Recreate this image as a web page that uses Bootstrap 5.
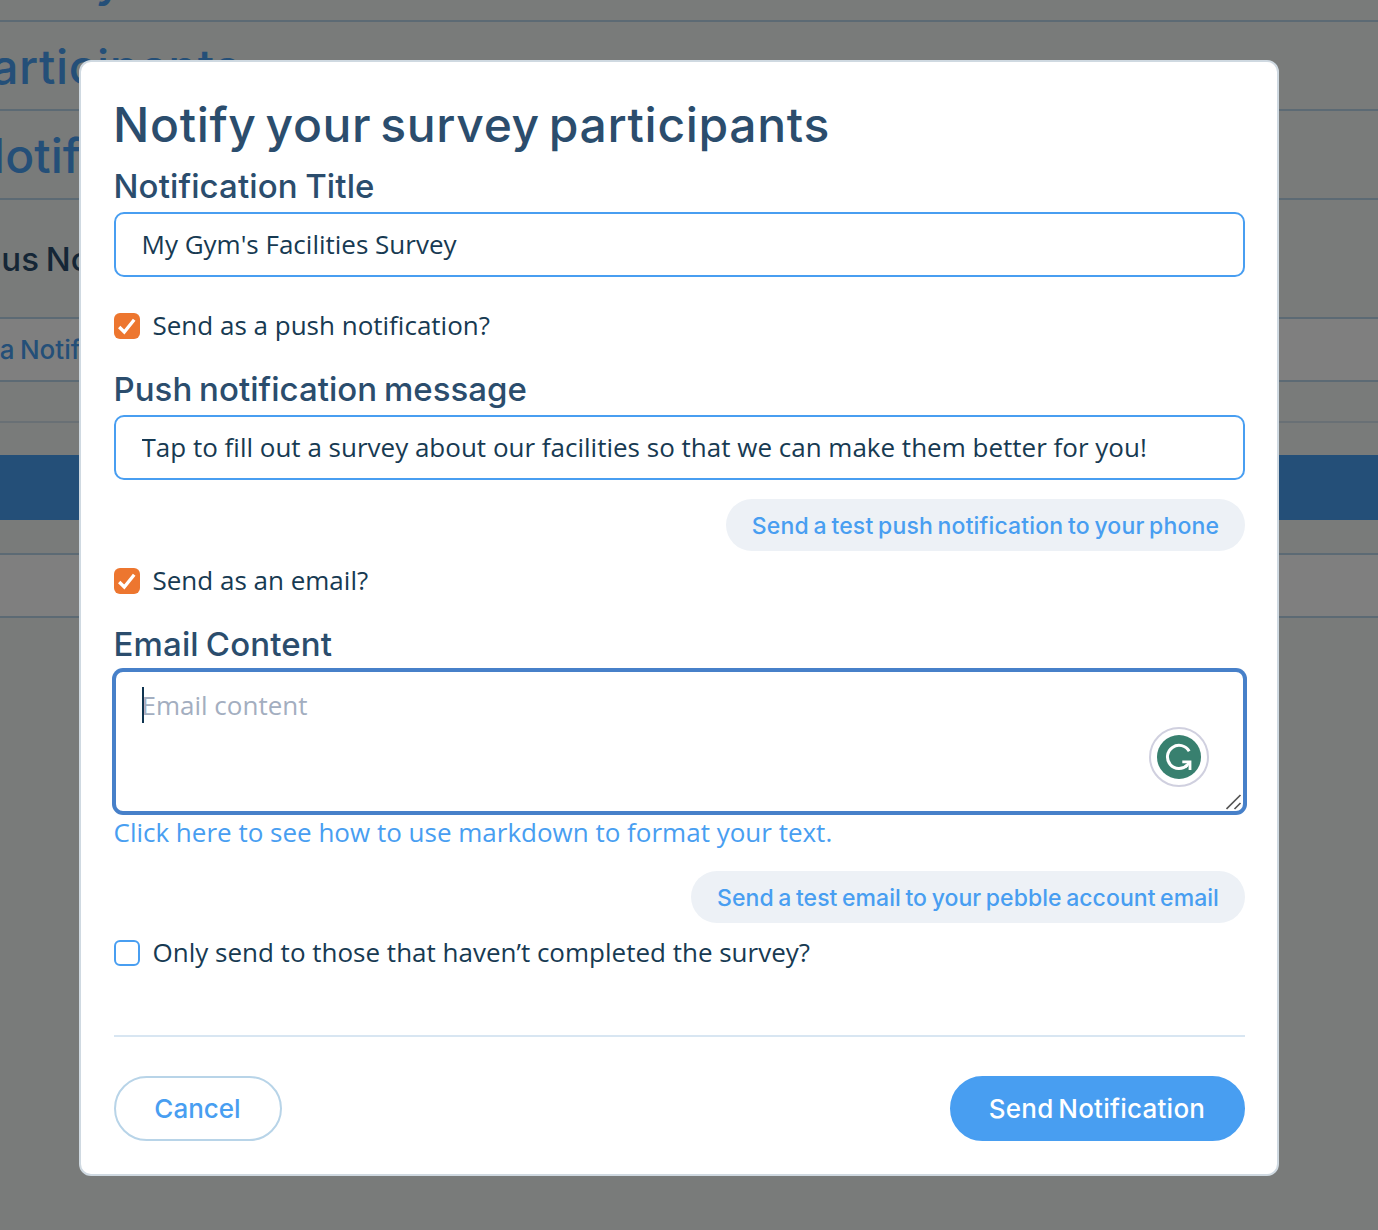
<!DOCTYPE html>
<html lang="en">
<head>
<meta charset="utf-8">
<meta name="viewport" content="width=device-width, initial-scale=1">
<title>Notify your survey participants</title>
<link href="https://cdn.jsdelivr.net/npm/bootstrap@5.3.0/dist/css/bootstrap.min.css" rel="stylesheet">
<style>
  :root { --blue: #489ef1; --navy: #2b4d6d; --ink: #173a52; --line: #b8d4e8; }
  body { background: #f2f6f4; color: var(--ink); font-family: "Open Sans", "Noto Sans", sans-serif; font-size: 26px; height: 1230px; overflow: hidden; }
  .display-face { font-family: Inter, sans-serif; font-weight: 500; }

  .page-behind { height: 1230px; overflow: hidden; white-space: nowrap; }
  .fold-row { border-bottom: 2px solid var(--line); color: var(--blue); font-size: 48px; line-height: 89px; height: 89px; letter-spacing: .6px; }
  .fold-row.first { height: 22px; display: flex; align-items: flex-end; line-height: 60px; padding-bottom: 11px; }
  .past-title { height: 117px; line-height: 119px; font-size: 33px; color: var(--navy); word-spacing: -2px; }
  .strip { height: 65px; border: solid var(--line); border-width: 2px 0; background: #fff; color: var(--blue); line-height: 61px; word-spacing: -1.5px; }
  .thin-rule { height: 2px; background: #d2e0ea; margin: 39px 0 32px; }
  .bar-solid { height: 65px; background: var(--blue); margin-bottom: 33px; }
  .out-a { margin-left: -40px; } .out-n { margin-left: -31px; letter-spacing: 0; } .out-p { margin-left: -98px; } .out-s { margin-left: -69.5px; } .out-y { margin-left: -41px; }

  .modal-backdrop { opacity: .5; }
  .modal-dialog { max-width: 1200px; margin: 60px 0 0 79px; }
  .modal-content { height: 1116px; border: 2px solid #cfd9e1; border-radius: 12px; padding: 33px 32px 33px 33px; background: #fff; color: var(--ink); }
  .big-title { font-size: 48px; line-height: 60px; margin: 0 0 11px -1px; color: var(--navy); letter-spacing: .68px; word-spacing: -4.6px; }
  .field-title { font-size: 33px; line-height: 40px; margin: 0 0 6px -.5px; color: var(--navy); letter-spacing: .12px; word-spacing: -1.5px; }
  .field-title.snug { letter-spacing: .03px; word-spacing: -2px; }
  .field-title.mail { letter-spacing: .15px; }
  .form-control, .form-control:focus { font-size: 26px; color: var(--ink); border: 2px solid var(--blue); border-radius: 10px; padding: 0 26px 2px 25.5px; height: 65px; box-shadow: none; }
  textarea.form-control, textarea.form-control:focus { height: 143px; min-height: 0; padding: 13px 26px 13px 25.5px; line-height: 40px; border-color: #4780c9; box-shadow: 0 0 0 2px #4780c9; resize: none; border-radius: 9px; }
  textarea.form-control::placeholder { color: #a3aec0; }
  .form-check { display: flex; align-items: center; gap: 12.5px; height: 40px; min-height: 0; padding: 0; margin: 0; }
  .form-check label { padding-bottom: 2px; }
  .form-check.spaced { margin-bottom: 23px; }
  .form-check.after-input { margin-top: 29px; }
  .form-check .form-check-input { float: none; width: 26px; height: 26px; margin: 0; flex: none; border: 2px solid var(--blue); border-radius: 6px; background-color: #fff; }
  .form-check .form-check-input:checked { border: 0; background: #ed762f url("data:image/svg+xml,%3Csvg xmlns='http://www.w3.org/2000/svg' viewBox='0 0 26 26'%3E%3Cpath d='M5.2 14 10.3 19 20.2 6.8' fill='none' stroke='%23fff' stroke-width='3.3'/%3E%3C/svg%3E") center / 26px no-repeat; }
  .pill { width: 519px; height: 52px; line-height: 54px; border-radius: 26px; padding: 0; border: 0; background: #edf1f6; color: var(--blue); font-size: 23px; letter-spacing: .15px; word-spacing: -1.6px; }
  .pill.tight { width: 554px; letter-spacing: .05px; }
  .push-row { margin: 19px 0 10px; }
  .mail-row { margin: 18px 0 10px; }
  .md-link { height: 40px; line-height: 38px; color: var(--blue); text-decoration: none; margin-left: -.5px; }
  .foot-btn { height: 65px; width: 168px; border-radius: 33px; font-size: 26px; padding: 0 1px 0 0; border: 2px solid var(--line); color: var(--blue); }
  .foot-btn.go { width: 295px; background: var(--blue); border-color: var(--blue); color: #fff; letter-spacing: .25px; word-spacing: -2.5px; }
  .cut { height: 2px; background: #d8e6f2; margin: 62px 0 39px; }
  .caret { position: absolute; left: 28px; top: 17px; width: 2px; height: 36px; background: #0f3450; }
  .helper { position: absolute; right: 36px; top: 57px; }
  .grip { position: absolute; right: 3px; top: 124px; }
</style>
</head>
<body>
<div class="page-behind display-face">
  <div class="fold-row first"><span class="out-y">Survey</span></div>
  <div class="fold-row"><div class="out-a">Participants</div></div>
  <div class="fold-row"><div class="out-n">Notifications</div></div>
  <div class="past-title"><div class="out-p">Previous Notifications</div></div>
  <div class="strip"><div class="out-s">Send a Notification</div></div>
  <div class="d-flex flex-column">
    <div class="thin-rule"></div>
    <div class="bar-solid"></div>
    <div class="strip"></div>
  </div>
</div>
<div class="modal-backdrop"></div>
<div class="modal d-block overflow-hidden" role="dialog" aria-label="Notify your survey participants">
  <div class="modal-dialog">
    <form class="modal-content">
      <h1 class="big-title display-face">Notify your survey participants</h1>
      <label class="field-title display-face" for="noteTitle">Notification Title</label>
      <input id="noteTitle" class="form-control" type="text" value="My Gym's Facilities Survey">
      <div class="form-check after-input spaced">
        <input class="form-check-input" type="checkbox" id="asPush" checked>
        <label for="asPush">Send as a push notification?</label>
      </div>
      <label class="field-title snug display-face" for="pushText">Push notification message</label>
      <input id="pushText" class="form-control" type="text" value="Tap to fill out a survey about our facilities so that we can make them better for you!">
      <div class="push-row d-flex justify-content-end">
        <button type="button" class="btn pill display-face">Send a test push notification to your phone</button>
      </div>
      <div class="form-check spaced">
        <input class="form-check-input" type="checkbox" id="asMail" checked>
        <label for="asMail">Send as an email?</label>
      </div>
      <label class="field-title snug mail display-face" for="mailText">Email Content</label>
      <div class="position-relative">
        <textarea id="mailText" class="form-control d-block" placeholder="Email content"></textarea>
        <span class="caret"></span>
        <svg class="helper" width="60" height="60" viewBox="0 0 60 60">
          <circle cx="30" cy="30" r="29" fill="#fff" stroke="#d0d0df" stroke-width="2"/>
          <circle cx="30" cy="30" r="22" fill="#38806f"/>
          <path d="M40.2 24.3A11.6 11.6 0 1 0 38.4 38" fill="none" stroke="#fff" stroke-width="3"/>
          <path d="M33.3 34.9H41V43" fill="none" stroke="#fff" stroke-width="2.8"/>
          <path d="M36 40.2 41 35" fill="none" stroke="#fff" stroke-width="2.8"/>
        </svg>
        <svg class="grip" width="16" height="16" viewBox="0 0 16 16"><path d="M.5 15 14.5 1M8.500 15 14.500 9" stroke="#555" stroke-width="1.7"/></svg>
      </div>
      <a class="md-link d-block" href="#">Click here to see how to use markdown to format your text.</a>
      <div class="mail-row d-flex justify-content-end">
        <button type="button" class="btn pill tight display-face">Send a test email to your pebble account email</button>
      </div>
      <div class="form-check">
        <input class="form-check-input" type="checkbox" id="onlyOpen">
        <label for="onlyOpen">Only send to those that haven’t completed the survey?</label>
      </div>
      <div class="cut"></div>
      <div class="d-flex justify-content-between">
        <button type="button" class="btn foot-btn display-face">Cancel</button>
        <button type="button" class="btn foot-btn go display-face">Send Notification</button>
      </div>
    </form>
  </div>
</div>
<script src="https://cdn.jsdelivr.net/npm/bootstrap@5.3.0/dist/js/bootstrap.bundle.min.js"></script>
</body>
</html>
